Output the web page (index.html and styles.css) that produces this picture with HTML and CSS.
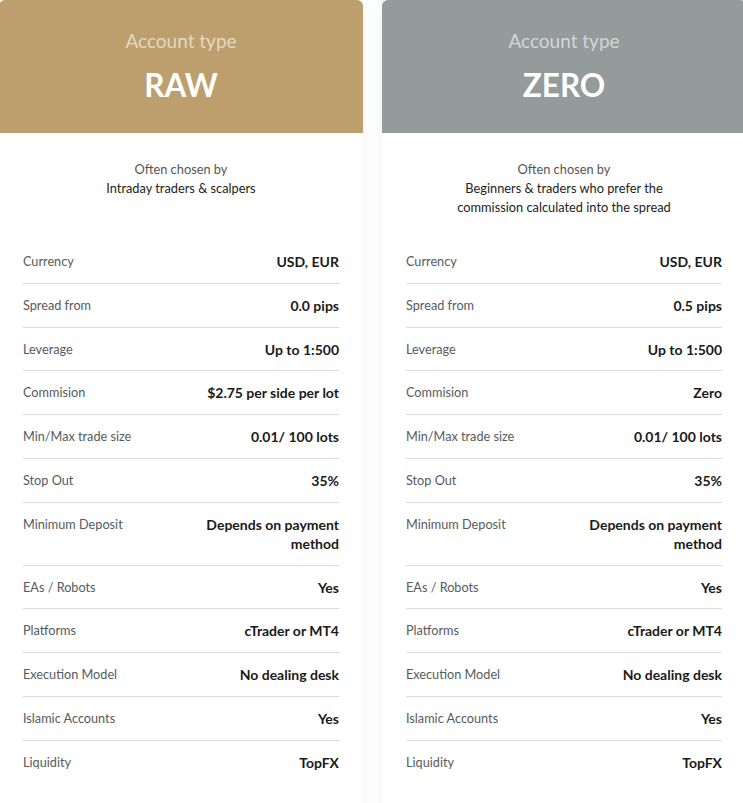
FILE: index.html
```html
<!DOCTYPE html>
<html lang="en">
<head>
<meta charset="utf-8">
<title>Account types</title>
<link rel="stylesheet" href="styles.css">
</head>
<body>
<div class="cards">
  <section class="card">
    <header class="card-head raw">
      <div class="kicker">Account type</div>
      <div class="name">RAW</div>
    </header>
    <div class="chosen">
      <div>Often chosen by</div>
      <div class="who">Intraday traders &amp; scalpers</div>
    </div>
    <div class="rows">
      <div class="row"><span class="label">Currency</span><span class="value">USD, EUR</span></div>
      <div class="row"><span class="label">Spread from</span><span class="value">0.0 pips</span></div>
      <div class="row"><span class="label">Leverage</span><span class="value">Up to 1:500</span></div>
      <div class="row"><span class="label">Commision</span><span class="value">$2.75 per side per lot</span></div>
      <div class="row"><span class="label">Min/Max trade size</span><span class="value">0.01/ 100 lots</span></div>
      <div class="row"><span class="label">Stop Out</span><span class="value">35%</span></div>
      <div class="row"><span class="label">Minimum Deposit</span><span class="value">Depends on payment method</span></div>
      <div class="row"><span class="label">EAs / Robots</span><span class="value">Yes</span></div>
      <div class="row"><span class="label">Platforms</span><span class="value">cTrader or MT4</span></div>
      <div class="row"><span class="label">Execution Model</span><span class="value">No dealing desk</span></div>
      <div class="row"><span class="label">Islamic Accounts</span><span class="value">Yes</span></div>
      <div class="row"><span class="label">Liquidity</span><span class="value">TopFX</span></div>
    </div>
  </section>
  <section class="card">
    <header class="card-head zero">
      <div class="kicker">Account type</div>
      <div class="name">ZERO</div>
    </header>
    <div class="chosen">
      <div>Often chosen by</div>
      <div class="who">Beginners &amp; traders who prefer the commission calculated into the spread</div>
    </div>
    <div class="rows">
      <div class="row"><span class="label">Currency</span><span class="value">USD, EUR</span></div>
      <div class="row"><span class="label">Spread from</span><span class="value">0.5 pips</span></div>
      <div class="row"><span class="label">Leverage</span><span class="value">Up to 1:500</span></div>
      <div class="row"><span class="label">Commision</span><span class="value">Zero</span></div>
      <div class="row"><span class="label">Min/Max trade size</span><span class="value">0.01/ 100 lots</span></div>
      <div class="row"><span class="label">Stop Out</span><span class="value">35%</span></div>
      <div class="row"><span class="label">Minimum Deposit</span><span class="value">Depends on payment method</span></div>
      <div class="row"><span class="label">EAs / Robots</span><span class="value">Yes</span></div>
      <div class="row"><span class="label">Platforms</span><span class="value">cTrader or MT4</span></div>
      <div class="row"><span class="label">Execution Model</span><span class="value">No dealing desk</span></div>
      <div class="row"><span class="label">Islamic Accounts</span><span class="value">Yes</span></div>
      <div class="row"><span class="label">Liquidity</span><span class="value">TopFX</span></div>
    </div>
  </section>
</div>
</body>
</html>
```

FILE: styles.css
```css
html, body {
  margin: 0;
  padding: 0;
  background: #ffffff;
  overflow: hidden;
}
body {
  font-family: Lato, "Open Sans", sans-serif;
  width: 743px;
  height: 803px;
}
.cards {
  display: flex;
  gap: 19px;
  margin-left: -1px;
  width: 800px;
}
.card {
  flex: 0 0 364px;
  width: 364px;
  background: #fff;
  border-radius: 6px 6px 0 0;
  box-shadow: 0 0 14px rgba(40, 60, 60, 0.07);
  padding-bottom: 40px;
}
.card-head {
  height: 133px;
  box-sizing: border-box;
  border-radius: 6px 6px 0 0;
  text-align: center;
  padding-top: 28px;
}
.raw { background: #bc9f6d; }
.zero { background: #939b9b; }
.kicker {
  font-size: 19px;
  line-height: 26px;
  color: rgba(255, 255, 255, 0.6);
}
.name {
  font-size: 31.5px;
  line-height: 40px;
  font-weight: 700;
  color: #fff;
  margin-top: 11px;
}
.chosen {
  height: 107px;
  box-sizing: border-box;
  padding: 27px 60px 0;
  text-align: center;
  font-size: 12.8px;
  line-height: 19px;
  color: #555;
}
.chosen .who {
  color: #222;
}
.rows {
  padding: 0 24px;
}
.row {
  display: flex;
  justify-content: space-between;
  align-items: flex-start;
  padding: 12px 0 11.8px;
  line-height: 19px;
  border-bottom: 1px solid #dcdcdc;
}
.row:last-child {
  border-bottom: none;
}
.label {
  font-size: 12.7px;
  color: #555b5e;
}
.value {
  font-size: 14px;
  font-weight: 700;
  color: #1a1a1a;
  text-align: right;
  max-width: 150px;
}
```
